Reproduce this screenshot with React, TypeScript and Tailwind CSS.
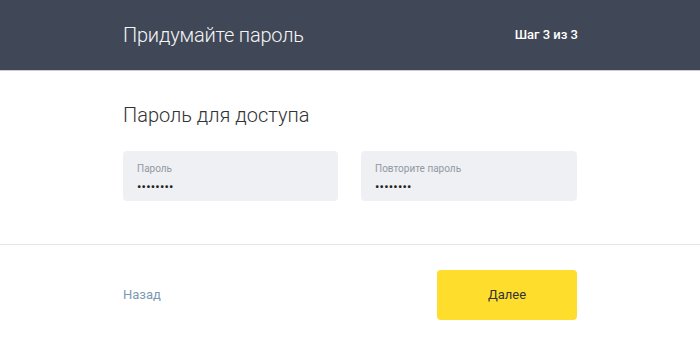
export default function App() {
  return (
    <div className="w-[700px] h-[344px] bg-white overflow-hidden" style={{ fontFamily: "Roboto, 'Noto Sans', sans-serif" }}>
      <header className="h-[71px] bg-[#404756] border-b border-[#c9ccd3] flex items-center justify-between pl-[123px] pr-[122px]">
        <h1 className="text-[20px] font-light text-[#f4f5f7] tracking-[-0.2px]">Придумайте пароль</h1>
        <span className="text-[13px] font-medium text-white">Шаг 3 из 3</span>
      </header>
      <section className="px-[123px] pt-[30px] pb-[43px] border-b border-[#e6e6e6]">
        <h2 className="text-[20px] font-light text-[#333333] leading-[28px]">Пароль для доступа</h2>
        <div className="mt-[22px] flex gap-[23px]">
          <div className="w-[215px] h-[50px] rounded-[4px] bg-[#eef0f4] px-[14px] pt-[12px]">
            <div className="text-[10px] text-[#9299a2] leading-[12px]">Пароль</div>
            <div className="text-[13px] text-[#222] leading-[14px] mt-[5px] tracking-[0.2px]">••••••••</div>
          </div>
          <div className="w-[216px] h-[50px] rounded-[4px] bg-[#eef0f4] px-[14px] pt-[12px]">
            <div className="text-[10px] text-[#9299a2] leading-[12px]">Повторите пароль</div>
            <div className="text-[13px] text-[#222] leading-[14px] mt-[5px] tracking-[0.2px]">••••••••</div>
          </div>
        </div>
      </section>
      <footer className="px-[123px] pt-[25px] flex items-center justify-between">
        <a className="text-[13px] text-[#7c98b5]">Назад</a>
        <button className="w-[140px] h-[50px] rounded-[4px] bg-[#ffdd2d] text-[13px] text-[#333]">Далее</button>
      </footer>
    </div>
  );
}
